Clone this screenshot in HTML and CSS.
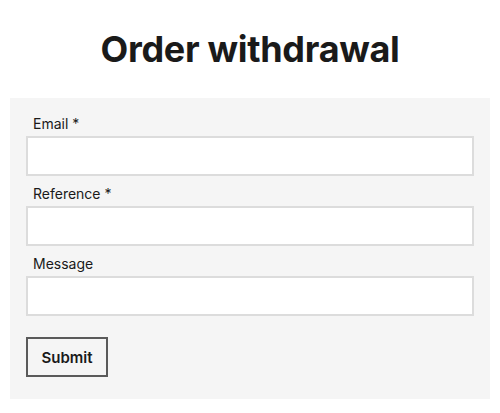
FILE: index.html
```html
<!DOCTYPE html>
<html lang="en">
  <head>
    <meta charset="UTF-8" />
    <meta name="viewport" content="width=device-width, initial-scale=1.0" />
    <title>Order withdrawal</title>
    <link rel="stylesheet" href="styles.css">
  </head>
  <body>
    <h1 class="title">Order withdrawal</h1>

    <form class="withdrawal-form">
      <div class="field">
        <label for="email">Email *</label>
        <input id="email" type="email" required />
      </div>
      <div class="field">
        <label for="reference">Reference *</label>
        <input id="reference" type="text" required />
      </div>
      <div class="field">
        <label for="message">Message</label>
        <input id="message" type="text" />
      </div>
      <button type="submit" class="submit">Submit</button>
    </form>
  </body>
</html>
```

FILE: styles.css
```css
body {
  margin: 0;
  padding: 0 10px;
  font-family: Inter, "Liberation Sans", sans-serif;
  color: #1a1a1a;
  background: #fff;
}
.title {
  margin: 0;
  padding-top: 27px;
  height: 98px;
  box-sizing: border-box;
  font-size: 36px;
  line-height: 44px;
  font-weight: 700;
  letter-spacing: -0.3px;
  text-align: center;
}
.withdrawal-form {
  background-color: #f5f5f5;
  padding: 16px 16px 22px;
}
.field {
  display: flex;
  flex-direction: column;
  gap: 2px;
  margin-bottom: 8px;
}
.field label {
  font-size: 14px;
  line-height: 20px;
  padding-left: 7px;
}
.field input {
  height: 40px;
  box-sizing: border-box;
  border: 2px solid #dcdcdc;
  background: #fff;
  font: inherit;
  padding: 0 10px;
  outline: none;
}
.submit {
  margin-top: 13px;
  height: 40px;
  width: 82px;
  box-sizing: border-box;
  background: transparent;
  border: 2px solid #5a5a5a;
  font-family: inherit;
  font-size: 15px;
  font-weight: 600;
  color: #1a1a1a;
  cursor: pointer;
}
```
